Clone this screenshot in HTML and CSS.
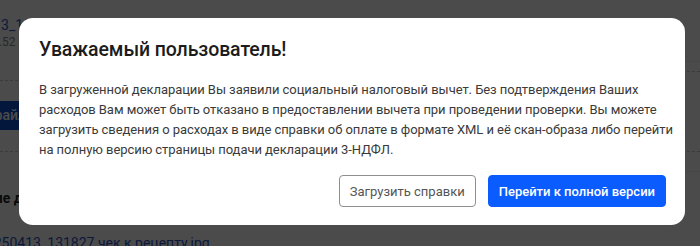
FILE: index.html
```html
<!DOCTYPE html>
<html lang="ru">
<head>
<meta charset="utf-8">
<title>Уважаемый пользователь</title>
<link rel="stylesheet" href="styles.css">
</head>
<body>
<div class="page">
  <div class="col-left">
    <div class="file-head">
      <a class="file-link first">20250413_131827.jpg</a>
      <div class="file-size">1.52 МБ</div>
    </div>
    <div class="dash dash-a"></div>
    <div class="upload-row"><span class="upload-btn">Выбрать файл</span></div>
    <div class="dash dash-b"></div>
    <div class="section-title">Подтверждающие документы</div>
    <a class="file-link second">20250413_131827 чек к рецепту.jpg</a>
  </div>
  <div class="col-right">
    <div class="line line-a"></div>
    <div class="dash dash-c"></div>
    <div class="dash dash-d"></div>
    <div class="line line-b"></div>
  </div>
</div>

<div class="overlay">
  <div class="modal" role="dialog">
    <h2 class="modal-title">Уважаемый пользователь!</h2>
    <p class="modal-text">В загруженной декларации Вы заявили социальный налоговый вычет. Без подтверждения Ваших расходов Вам может быть отказано в предоставлении вычета при проведении проверки. Вы можете загрузить сведения о расходах в виде справки об оплате в формате XML и её скан-образа либо перейти на полную версию страницы подачи декларации 3-НДФЛ.</p>
    <div class="modal-actions">
      <button class="btn btn-outline">Загрузить справки</button>
      <button class="btn btn-primary">Перейти к полной версии</button>
    </div>
  </div>
</div>
</body>
</html>
```

FILE: styles.css
```css
html, body {
  margin: 0;
  padding: 0;
  height: 100%;
  overflow: hidden;
}

body {
  background: #ffffff;
  font-family: Roboto, "Liberation Sans", Arial, sans-serif;
  color: #333333;
}

/* Background page (covered by overlay) */
.page {
  display: grid;
  grid-template-columns: 1fr 200px;
  height: 246px;
}

.col-left {
  display: flex;
  flex-direction: column;
  align-items: flex-start;
}

.file-head {
  height: 62px;
  padding-top: 17px;
  box-sizing: border-box;
}

.file-link {
  display: block;
  color: #2f55c8;
  font-size: 14px;
  line-height: 16px;
  text-decoration: none;
}

.file-link.first {
  margin-left: -54px;
}

.file-size {
  margin-left: -8px;
  margin-top: 2px;
  font-size: 12px;
  line-height: 14px;
  color: #888888;
}

.dash {
  border-top: 1px dashed #c8c8c8;
  align-self: stretch;
}

.dash-a { margin-top: 18px; }

.upload-row {
  margin-top: 20px;
  margin-left: -83px;
}

.upload-btn {
  display: inline-block;
  background: #0b4fd0;
  color: #ffffff;
  font-size: 14px;
  line-height: 29px;
  padding: 0 40px 0 14px;
  font-weight: 500;
}

.dash-b { margin-top: 21px; }

.section-title {
  margin-top: 38px;
  margin-left: -114px;
  font-weight: 700;
  font-size: 14px;
  line-height: 16px;
  color: #222222;
}

.file-link.second {
  margin-top: 29px;
  margin-left: -22px;
}

.col-right {
  display: flex;
  flex-direction: column;
}

.line {
  border-top: 1px solid #ececec;
}

.line-a { margin-top: 61px; }
.dash-c { margin-top: 9px; }
.dash-d { margin-top: 79px; }
.line-b { margin-top: 19px; }

/* Overlay + modal */
.overlay {
  position: fixed;
  inset: 0;
  background: rgba(0, 0, 0, 0.705);
  display: flex;
  align-items: flex-start;
  justify-content: flex-start;
  padding: 18px 0 0 19px;
}

.modal {
  width: 666px;
  box-sizing: border-box;
  background: #ffffff;
  border-radius: 14px;
  padding: 20px 19px 18px 20px;
}

.modal-title {
  margin: 0 0 18px 0;
  font-family: Roboto, "Liberation Sans", sans-serif;
  font-weight: 500;
  font-size: 19.5px;
  line-height: 24px;
  letter-spacing: -0.1px;
  color: #1c1c1c;
}

.modal-text {
  margin: 0 -8px 15px 0;
  font-size: 13px;
  line-height: 20px;
  letter-spacing: -0.06px;
  color: #3a3a3a;
}

.modal-actions {
  display: flex;
  justify-content: flex-end;
  gap: 12px;
}

.btn {
  height: 32px;
  padding: 0 10px;
  border-radius: 4px;
  font-family: Roboto, "Liberation Sans", sans-serif;
  font-size: 13px;
  cursor: pointer;
  box-sizing: border-box;
}

.btn-outline {
  background: #ffffff;
  border: 1px solid #8f8f8f;
  color: #555555;
}

.btn-primary {
  background: #0a5cff;
  border: 1px solid #0a5cff;
  color: #ffffff;
  font-weight: 500;
}
```
